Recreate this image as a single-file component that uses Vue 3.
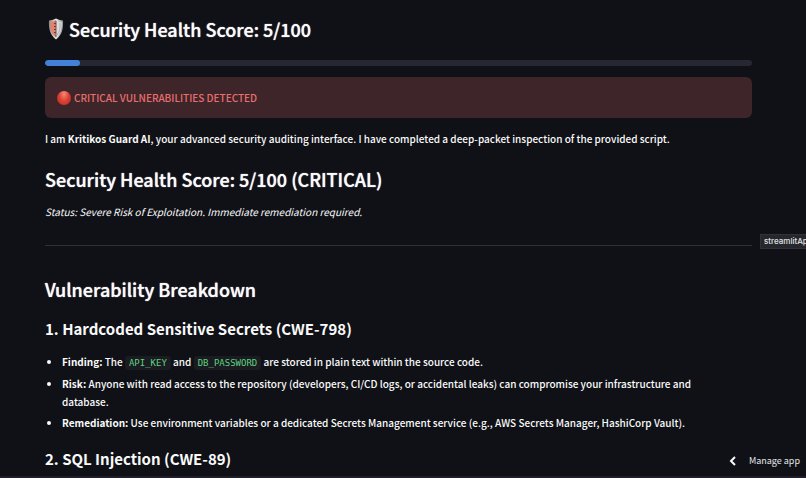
<script setup>
const score = 5
const findings = [
  { label: 'Risk:', text: 'Anyone with read access to the repository (developers, CI/CD logs, or accidental leaks) can compromise your infrastructure and database.' },
  { label: 'Remediation:', text: 'Use environment variables or a dedicated Secrets Management service (e.g., AWS Secrets Manager, HashiCorp Vault).' },
]
</script>

<template>
  <div class="page">
    <main class="report">
      <h3 class="title">
        <svg class="shield" viewBox="-2 0 20 22" aria-hidden="true">
          <defs>
            <linearGradient id="steel" x1="0" x2="1">
              <stop offset="0" stop-color="#85898b" />
              <stop offset="0.5" stop-color="#e8e6e2" />
              <stop offset="1" stop-color="#8b9092" />
            </linearGradient>
          </defs>
          <path d="M9 0.500 Q13 2.500 16 2.500 C16.500 11 15 17 9 21.500 C3 17 1.500 11 2 2.500 Q5 2.500 9 0.500Z" fill="url(#steel)" />
          <path d="M9 2 Q6 4 3.200 4 C3 11 4.500 15.500 9 19.500Z" fill="#e3816f" />
          <path d="M9 2 Q12 4 14.800 4 C15 11 13.500 15.500 9 19.500Z" fill="#dcdcda" />
          <path d="M9 3V19" stroke="#6b5653" stroke-width="1" />
          <path d="M7 5.500h2M7 8.500h2M7 11.500h2M7 14.500h2" stroke="#713c38" stroke-width="1.200" />
          <path d="M13 4.500 C13.500 10 12.500 14 10 17" fill="none" stroke="#aeb1b1" stroke-width="1" />
        </svg>
        <span>Security Health Score: 5/100</span>
      </h3>

      <div class="track" role="progressbar" aria-label="Security health score" :aria-valuenow="score" aria-valuemin="0" aria-valuemax="100">
        <div class="fill" :style="{ width: score + '%' }"></div>
      </div>

      <div class="alert" role="alert">
        <span class="dot"></span>
        <span>CRITICAL VULNERABILITIES DETECTED</span>
      </div>

      <p class="intro">I am <strong>Kritikos Guard AI</strong>, your advanced security auditing interface. I have completed a deep-packet inspection of the provided script.</p>

      <h3 class="heading">Security Health Score: 5/100 (CRITICAL)</h3>
      <p class="status"><em>Status: Severe Risk of Exploitation. Immediate remediation required.</em></p>
      <hr class="rule" />

      <h3 class="heading">Vulnerability Breakdown</h3>
      <h4 class="subheading">1. Hardcoded Sensitive Secrets (CWE-798)</h4>
      <ul class="findings">
        <li><strong>Finding:</strong> The <code>API_KEY</code> and <code>DB_PASSWORD</code> are stored in plain text within the source code.</li>
        <li v-for="item in findings" :key="item.label"><strong>{{ item.label }}</strong> {{ item.text }}</li>
      </ul>
      <h4 class="subheading">2. SQL Injection (CWE-89)</h4>
    </main>

    <div class="tooltip" role="tooltip">streamlitApp</div>

    <button class="manage" type="button">
      <svg viewBox="0 0 8 10" aria-hidden="true"><path d="M6 1L2 5L6 9" /></svg>
      <span>Manage app</span>
    </button>
  </div>
</template>

<style>
body {
  margin: 0;
  background: #0f1116;
}
</style>

<style scoped>
.page {
  position: relative;
  height: 100vh;
  overflow: hidden;
  box-sizing: border-box;
  border-bottom: 2px solid #201e28;
  background: #0f1116;
  color: #fafafa;
  font-family: "Noto Sans CJK SC", "Noto Sans", sans-serif;
  font-size: 10px;
  font-weight: 500;
  line-height: 18px;
  font-kerning: normal;
}
.report {
  padding: 15px 54px 0 45px;
}
h3, h4, p, ul {
  margin: 0;
}
h3 {
  font-weight: 500;
  text-shadow: 0 0 1px currentColor;
}
h4 {
  font-weight: 700;
}
.title {
  display: flex;
  align-items: center;
  gap: 4px;
  font-size: 18px;
  line-height: 28px;
}
.shield {
  width: 20px;
  height: 22px;
}
.track {
  height: 6px;
  margin-top: 17px;
  border-radius: 3px;
  background: #262730;
  overflow: hidden;
}
.fill {
  height: 100%;
  border-radius: 3px;
  background: #4380d8;
}
.alert {
  display: flex;
  align-items: center;
  gap: 3px;
  margin-top: 11px;
  padding: 11px 12px;
  border-radius: 6px;
  background: #3e2529;
  color: #e86f6f;
  line-height: 19px;
}
.dot {
  width: 14px;
  height: 14px;
  border-radius: 50%;
  background: radial-gradient(ellipse at 50% 20%, #f58a78, #dc3f31 50%, #b92b23);
}
.intro {
  margin-top: 12px;
}
.heading {
  margin-top: 17px;
  font-size: 18px;
  line-height: 28px;
}
.status {
  margin-top: 10px;
  font-weight: 400;
}
.rule {
  height: 1px;
  margin: 24px 0 29px;
  border: 0;
  background: #2e3037;
}
.subheading {
  margin-top: 14px;
  font-size: 15px;
  line-height: 24px;
}
.findings {
  display: flex;
  flex-direction: column;
  gap: 3px;
  margin: 12px 0 15px;
  padding: 0 30px 0 17px;
}
code {
  padding: 2px 4px;
  border-radius: 3px;
  background: #1a1c22;
  color: #5fd27f;
  font-family: "DejaVu Sans Mono", monospace;
  font-size: 9px;
  font-weight: 400;
}
.tooltip {
  position: absolute;
  top: 234px;
  left: calc(100% - 46px);
  padding: 0 3px;
  border: 1px solid #303238;
  background: #25272c;
  color: #e4e4e6;
  font-family: Inter, sans-serif;
  font-size: 8px;
  line-height: 13px;
  white-space: nowrap;
}
.manage {
  position: absolute;
  right: 0;
  bottom: 0;
  display: flex;
  align-items: center;
  gap: 12px;
  padding: 5px 6px 5px 12px;
  border: 0;
  background: #0f1116;
  color: #e6e6e8;
  font-family: inherit;
  font-size: 9px;
  line-height: 20px;
}
.manage svg {
  width: 8px;
  height: 10px;
  fill: none;
  stroke: #fafafa;
  stroke-width: 2;
}
</style>
